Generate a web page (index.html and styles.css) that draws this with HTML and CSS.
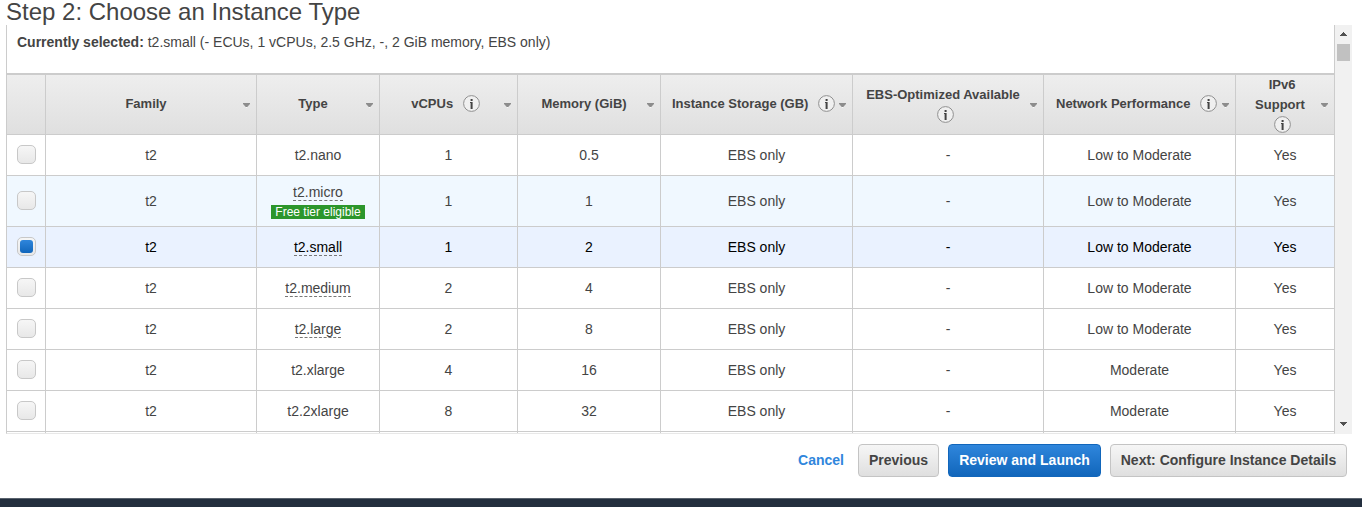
FILE: index.html
```html
<!DOCTYPE html>
<html lang="en">
<head>
<meta charset="utf-8">
<title>Step 2: Choose an Instance Type</title>
<link rel="stylesheet" href="styles.css">
</head>
<body>
<h1 class="title">Step 2: Choose an Instance Type</h1>
<main class="pane">
  <section class="content">
    <p class="selected"><b>Currently selected:</b> t2.small (- ECUs, 1 vCPUs, 2.5 GHz, -, 2 GiB memory, EBS only)</p>
    <div class="table" id="table">
      <div class="row head">
        <div class="cell"></div>
        <div class="cell"><span class="label">Family</span><i class="sort"></i></div>
        <div class="cell"><span class="label">Type</span><i class="sort"></i></div>
        <div class="cell"><span class="label with-info">vCPUs <i class="info"></i></span><i class="sort"></i></div>
        <div class="cell"><span class="label">Memory (GiB)</span><i class="sort"></i></div>
        <div class="cell"><span class="label with-info">Instance Storage (GB) <i class="info"></i></span><i class="sort"></i></div>
        <div class="cell"><span class="label stacked">EBS-Optimized Available<br><i class="info"></i></span><i class="sort"></i></div>
        <div class="cell"><span class="label with-info">Network Performance <i class="info"></i></span><i class="sort"></i></div>
        <div class="cell"><span class="label stacked"><span class="indent">IPv6</span><br>Support<br><i class="info"></i></span><i class="sort"></i></div>
      </div>
    </div>
  </section>
  <div class="scrollbar">
    <svg class="up" width="7" height="4" viewBox="0 0 7 4" shape-rendering="crispEdges"><path d="M3 0h1v1h1v1h1v1h1v1H0V3h1V2h1V1h1z" fill="#505050"/></svg>
    <div class="thumb"></div>
    <svg class="down" width="7" height="4" viewBox="0 0 7 4" shape-rendering="crispEdges"><path d="M0 0h7v1H6v1H5v1H4v1H3V3H2V2H1V1H0z" fill="#505050"/></svg>
  </div>
</main>
<nav class="actions">
  <a class="cancel">Cancel</a>
  <button class="btn previous">Previous</button>
  <button class="btn primary">Review and Launch</button>
  <button class="btn next">Next: Configure Instance Details</button>
</nav>
<footer class="footer"></footer>
<script src="table.js"></script>
</body>
</html>
```
FILE: styles.css
```css
* { box-sizing: border-box; }
body {
  margin: 0;
  height: 507px;
  overflow: hidden;
  background: #fff;
  color: #444;
  font: 14px/20px "Liberation Sans", Arial, sans-serif;
}
.title {
  margin: 0;
  height: 25px;
  padding-left: 6px;
  font-size: 24px;
  line-height: 24px;
  font-weight: normal;
  white-space: nowrap;
}
.pane {
  display: flex;
  height: 409px;
  margin: 0 10px 0 6px;
  overflow: hidden;
}
.content {
  width: 1329px;
  height: 409px;
  overflow: hidden;
  border-left: 1px solid #ccc;
  border-right: 1px solid #ccc;
  border-bottom: 1px solid #e8e8e8;
}
.selected {
  margin: 0;
  height: 48px;
  padding: 7px 0 0 10px;
  white-space: nowrap;
}
.table { border-top: 2px solid #ccc; width: 1328px; }
.row {
  display: grid;
  grid-template-columns: 39px 211px 123px 138px 143px 192px 191px 192px 99px;
  height: 41px;
}
.cell {
  display: flex;
  align-items: center;
  justify-content: center;
  border-right: 1px solid #ccc;
  border-bottom: 1px solid #ccc;
  white-space: nowrap;
}
.row .cell:first-child { padding: 0 0 2px 1px; }
.type { display: flex; flex-direction: column; align-items: center; }
.head {
  height: 60px;
  grid-template-rows: 60px;
  font-size: 13px;
  font-weight: bold;
  background: linear-gradient(#eee, #dfdfdf);
}
.head .cell { padding: 0 5px 0 3px; }
.label { flex: 1; text-align: center; margin-top: -2px; }
.with-info { padding-left: 4px; }
.stacked { margin: 0 0 -1px; }
.indent { padding-left: 4px; }
.sort { width: 8px; height: 5px; margin-top: 1px; }
.sort svg { display: block; }
.info {
  display: inline-block;
  width: 17px;
  height: 17px;
  margin-left: 6px;
  vertical-align: -4px;
}
.stacked .info { margin-left: 4px; }
.info svg { display: block; }
.free { height: 51px; background: #f0f8ff; }
.checked { background: #eaf2ff; color: #000; }
.tip { line-height: 16px; border-bottom: 1px dashed #777; }
.tag {
  height: 14px;
  margin-top: 4px;
  padding: 0 4px;
  background: #2c962c;
  color: #fff;
  font-size: 12px;
  line-height: 14px;
}
.box {
  display: flex;
  align-items: center;
  justify-content: center;
  width: 19px;
  height: 19px;
  border: 1px solid #c8c8c8;
  border-radius: 5px;
  background: linear-gradient(#f6f6f6, #e8e8e8);
}
.checked .box::after {
  content: "";
  width: 13px;
  height: 13px;
  border-radius: 3px;
  background: linear-gradient(#2f86dc, #1166bb);
}
.scrollbar {
  display: flex;
  flex-direction: column;
  align-items: center;
  width: 17px;
  background: #f1f1f1;
}
.up { margin-top: 7px; }
.thumb { width: 13px; height: 17px; margin-top: 8px; background: #c1c1c1; }
.down { margin: auto 0 8px; }
.actions {
  display: flex;
  align-items: center;
  justify-content: flex-end;
  height: 64px;
  padding: 0 15px 11px 0;
  font-weight: bold;
}
.cancel { margin: -2px 14px 0 0; color: #2f86dc; }
.btn {
  height: 33px;
  margin: 0;
  padding: 0 0 2px;
  border: 1px solid #c4c4c4;
  border-radius: 4px;
  background: linear-gradient(#f6f6f6, #dfdfdf);
  color: #444;
  font: bold 14px/20px "Liberation Sans", Arial, sans-serif;
  white-space: nowrap;
}
.previous { width: 81px; }
.primary {
  width: 153px;
  margin: 0 9px;
  border-color: #1166bb;
  background: linear-gradient(#2f86dc, #1166bb);
  color: #fff;
}
.next { width: 237px; }
.footer { height: 9px; background: #232f3e; border-top: 1px solid #59626d; }
```
FILE: table.js
```js
const rows = [
  ["t2.nano", "1", "0.5", "Low to Moderate"],
  ["t2.micro", "1", "1", "Low to Moderate", "free"],
  ["t2.small", "1", "2", "Low to Moderate", "checked"],
  ["t2.medium", "2", "4", "Low to Moderate"],
  ["t2.large", "2", "8", "Low to Moderate"],
  ["t2.xlarge", "4", "16", "Moderate"],
  ["t2.2xlarge", "8", "32", "Moderate"]
];
const tips = ["t2.micro", "t2.small", "t2.medium", "t2.large"];
const cell = (html) => `<div class="cell">${html}</div>`;
document.getElementById("table").insertAdjacentHTML("beforeend", rows.map(([type, cpu, mem, net, state]) => {
  const name = `<span class="${tips.includes(type) ? "tip" : ""}">${type}</span>`;
  const tag = state === "free" ? '<span class="tag">Free tier eligible</span>' : "";
  return `<div class="row ${state || ""}">` + [
    '<span class="box"></span>', "t2", `<div class="type">${name}${tag}</div>`,
    cpu, mem, "EBS only", "-", net, "Yes"
  ].map(cell).join("") + "</div>";
}).join("") + '<div class="row">' + cell("").repeat(9) + "</div>");

document.querySelectorAll(".info").forEach((el) => {
  el.innerHTML = '<svg width="17" height="17" viewBox="0 0 17 17"><circle cx="8.5" cy="8.5" r="7.9" fill="#f0f0f0" stroke="#909090"/><path d="M7.6 4h2v2h-2zM7 7h2.6v7h-2V8H7z" fill="#444"/></svg>';
});
document.querySelectorAll(".sort").forEach((el) => {
  el.innerHTML = '<svg width="8" height="5" viewBox="0 0 8 5"><path d="M0 1h7L3.5 5z" fill="#fff"/><path d="M0 0h7v1L4.3 4H2.7L0 1z" fill="#8c8c8c"/></svg>';
});
```
